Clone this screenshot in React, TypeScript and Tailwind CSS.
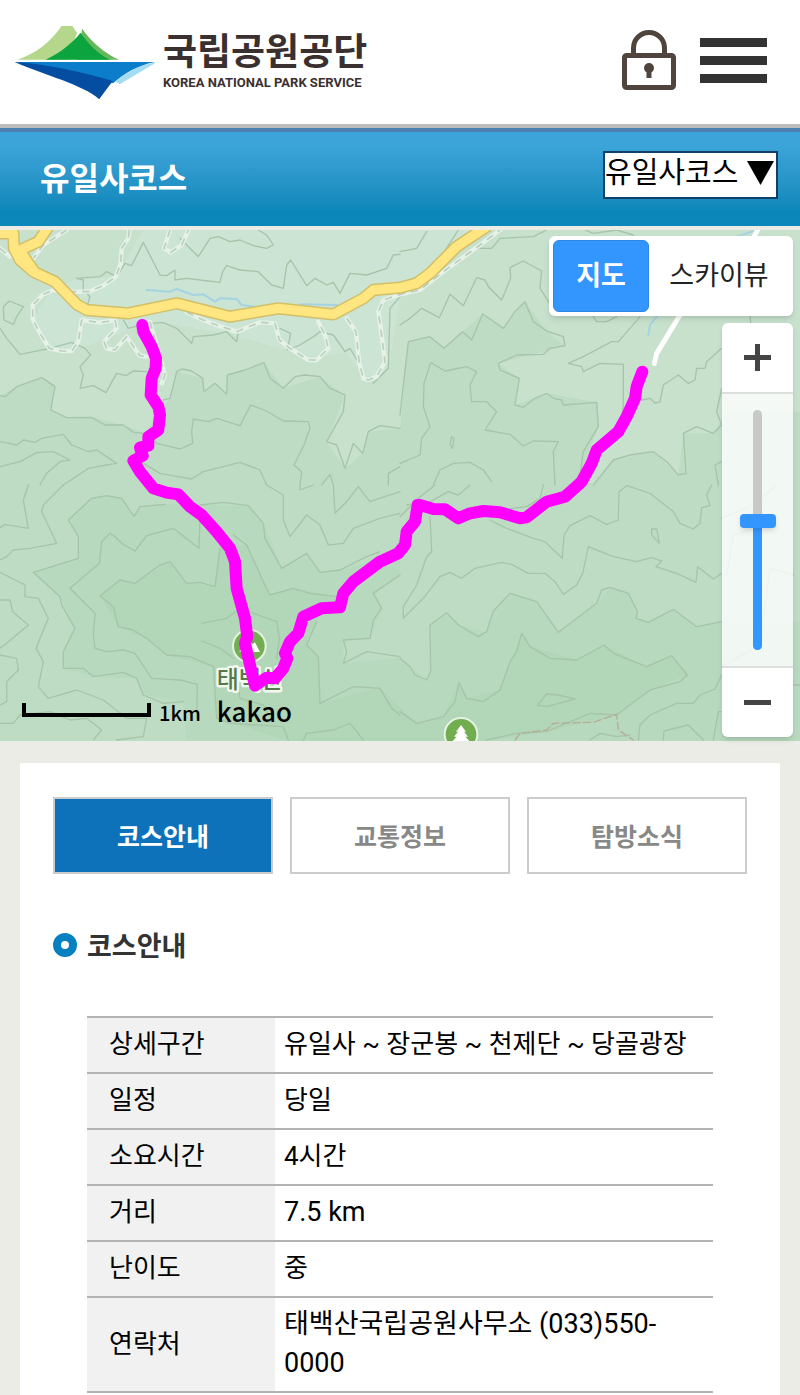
import { useState } from "react";

const courses = ["유일사코스", "백단사코스", "당골코스"];
const tabs = ["코스안내", "교통정보", "탐방소식"];

const details = [
  { label: "상세구간", value: "유일사 ~ 장군봉 ~ 천제단 ~ 당골광장" },
  { label: "일정", value: "당일" },
  { label: "소요시간", value: "4시간" },
  { label: "거리", value: "7.5 km", numeric: true },
  { label: "난이도", value: "중" },
  { label: "연락처", value: "태백산국립공원사무소 (033)550-0000", numeric: true },
];

// --- Map data, one list of lines per map tile (1200 x 780 units each) ---
const contoursNW = [
  "0,310 20,340 60,388 150,370 215,352 255,370 272,390 240,425 250,450 240,490 280,482 318,503 350,445 378,452 400,438 440,440",
  "490,525 510,520 530,440 545,432 575,438 608,460 612,500 645,475 680,507 682,450 735,435 792,413 810,460 850,490 885,455 915,450 960,455 990,490 1035,510 1030,560 980,650 1010,660 1035,730 1060,655 1088,685 1105,620 1140,602 1200,610",
  "0,512 15,515 50,485 125,458 165,485 152,555 200,578 275,577 315,600 370,600 400,622 435,625 470,655 540,672 578,655 575,620 580,582 625,590 650,580 720,602 752,540 800,558 850,588 925,590 930,610 912,660 882,720 905,740 900,780",
  "0,650 50,660 70,645 105,652 125,640 190,628 215,660 265,680 290,675 350,715 320,720 265,730 190,780",
  "0,725 60,710 110,683 160,680 210,705 180,710 140,745 120,780",
  "430,715 480,745 575,762 610,740 720,712 780,735 800,780",
  "230,160 300,155 320,140 350,155 375,115 395,122 430,52 480,150 500,152 525,135 525,165 560,160 600,165 660,172 668,140 680,122 720,135 775,140 815,180 850,190 860,120 872,105 920,182 945,160 980,180 1000,172 1020,205 1050,145 1100,150 1160,130 1180,90 1200,88",
  "540,40 595,95 630,40 655,35 690,50 720,45 760,62 800,70 820,60 800,30 775,15",
  "10,245 28,228 70,245 50,275 40,298 12,285 10,245",
  "370,285 385,310 440,295 490,293 530,310 575,355 580,335 640,330 680,320 710,350 715,320",
  "840,310 872,325 862,375 900,360 940,335 960,320 1000,330 1035,380 1050,370 1080,420",
  "1120,475 1165,430 1170,250 1200,215",
  "230,160 250,165 250,195 270,215 262,240",
  "1165,780 1165,745 1200,725",
  "965,780 990,748 1000,780",
];

const contoursNE = [
  "0,300 30,280 65,250 118,278 150,208 190,242 230,158 255,165 265,185 305,225 332,160 330,128 370,108 425,138 420,190 447,232",
  "0,570 25,350 90,335 132,370 188,320 215,345 248,267 310,310 345,260 375,230 400,290 440,318 490,335 495,362 450,370 430,388 350,390 295,415 300,435 358,460 345,540 370,547 405,520 440,505 460,520 485,525 490,540 590,532 595,605 550,680 540,750",
  "0,715 60,690 65,640 90,605 70,545 72,475 92,413 135,438 200,425 230,440 210,480 215,530 260,530 290,560 255,615 330,628 370,663 400,648 475,650 460,680 465,780",
  "100,780 120,735 160,715 210,712 250,735 275,770",
  "150,660 155,635 162,640 158,670 150,660",
  "720,275 690,310 655,350 635,350 550,395 505,415 545,425 550,440 600,415 670,418 670,540 665,580",
  "965,370 920,410 915,430 890,430 885,465 865,475 835,450 790,480 780,530 765,535 750,520 725,525",
  "965,490 950,560 965,600 940,625 890,605 850,625 858,745 835,750 800,710 760,680 690,690 640,705 580,780",
  "965,710 945,720 955,780",
  "0,80 50,70 80,20",
  "0,180 100,130 175,15",
  "240,70 275,70 300,40 400,35 440,15",
  "555,15 580,25 650,15 700,30",
  "580,275 590,290 620,290 650,275",
  "1050,275 1055,310 1110,330",
];

const contoursSW = [
  "85,0 70,45 85,130 15,118 0,128",
  "190,0 130,60 125,80 170,175 90,190 40,195 20,215 0,225",
  "495,58 420,65 402,95 365,40 320,32 275,40 205,105 235,155 235,220 100,262 180,335 185,360 225,430 190,500 190,550 250,550 280,575 370,562 410,580 430,630 490,655 550,650",
  "600,100 597,190 520,130 440,152 405,198 365,175 345,155 330,145 305,170 298,235 210,310 285,385 280,450 285,490 320,500 370,495 405,505 455,580 540,585 592,598 590,700",
  "660,190 645,305 600,292 560,295 510,230 480,240 405,295 360,285 300,332 340,365 355,425 400,435 440,460 500,510 570,515 640,545 650,700 690,715 850,725 865,765",
  "600,60 670,52 745,62 790,115 795,160 845,250 920,205 960,262 1020,255 1100,215 1140,200",
  "800,0 850,30 850,105 870,155 920,90 960,120 985,180 1030,175 1060,130 1100,115 1140,100 1200,85",
  "700,150 740,180 790,290 810,330 880,310 930,325 1010,335",
  "605,415 680,400 720,370 830,410 838,460 830,520",
  "605,468 660,490 700,520",
  "950,410 920,480 955,515 960,655 1060,605 1140,610 1175,670 1200,690",
  "1200,270 1120,325 1145,370 1120,405 1110,460 1030,465 1040,500 1030,535 1100,500 1200,515",
  "0,345 30,345 38,380 85,420 20,475 0,490",
  "0,262 75,300 75,335 115,340 145,400 108,490 130,530 115,605 145,640 230,615 310,645 380,700 440,700 430,755 350,765",
  "0,510 50,520 55,555 20,590 20,650 0,660",
  "0,715 40,715 60,690 150,680 210,705 260,700 305,735 280,765",
  "910,765 920,745 1000,735 1050,715 1090,765",
  "1000,0 1005,85 1040,50 1075,5 1110,50 1200,20",
  "900,0 900,15 940,0",
  "715,600 720,640 790,660 800,680",
];

const contoursSE = [
  "0,95 55,40 105,0",
  "20,60 90,50 145,20 175,30 210,0",
  "220,80 300,75 380,65 420,40 430,0",
  "90,95 95,200 80,215 50,300 10,365 10,400 70,340 120,275 150,262 185,280 225,250 305,232 335,238 385,265 435,265 465,290 490,328 530,300 548,265 565,185 640,215 710,230 755,218 785,228 768,245 830,265 888,292 893,245 940,282 965,265",
  "270,105 320,130 400,160 435,170 487,220 492,150 510,122 570,92 620,118 655,105 657,20 680,2 750,25 820,80 840,115 880,132 900,115 905,68 930,62 920,30 935,0",
  "0,520 30,545 45,570 80,585 92,560 90,420 140,383 175,420 235,455 260,440 280,378 330,325 410,350 475,442 590,355 605,315 630,307 685,325 712,380 708,400 745,412 820,373 890,425 965,410",
  "0,680 50,715 130,695 165,650 177,592 200,640 250,650 300,615 330,530 350,500 365,445 390,485 450,520 530,525 612,480 640,505 740,545 815,512 862,570 840,590 750,615 650,690 570,685 440,740 350,745 260,765",
  "412,660 440,627 475,630 525,642 440,665 412,660",
  "755,132 770,132 778,175 755,150 755,132",
  "715,765 720,720 750,690 830,655 880,655 900,630 945,612 965,570",
  "790,765 792,738 865,720 910,765",
  "940,765 955,680 965,680",
  "570,765 600,745 650,755 690,750",
  "965,100 1060,60 1130,0",
  "980,270 1000,150 1060,130",
  "965,545 1080,480 1110,250 1180,270",
  "1180,600 1200,600",
];

const minorRoads = [
  "200,15 130,60 100,100",
  "0,70 30,95",
  "388,15 385,40 365,70 362,115 348,155 308,183 265,200 220,200 160,195 130,208 98,240 98,283 120,325 148,370 185,378 215,378 235,350 245,285 300,293 345,285 350,310 312,350 320,370 345,375 380,335 420,392 440,395",
  "510,15 492,70 512,82 545,60 565,15",
  "450,290 495,450 485,475",
  "560,262 610,285 650,300 710,320 780,292 825,295 838,345 870,370 925,405 950,405 985,370 975,330 955,290",
  "1040,280 1068,320 1078,415 1090,460 1105,465 1130,455 1155,410 1145,330 1135,260 1150,225 1200,208 1260,195 1330,140 1440,60 1500,15",
];

const mainRoads = [
  "145,5 115,50 60,75 75,100 100,135",
  "-10,25 40,25 42,70 60,105 100,140 165,170 230,238 260,255 385,265 530,235 690,275 835,250 1000,268 1090,220 1120,195 1200,188 1250,175 1290,145 1370,65 1460,5 1480,-10",
];

const streams = [
  "440,195 510,200 530,192 580,210 610,208 645,230 660,220 710,222 725,240 765,245",
  "900,238 1010,240",
  "1970,275 1950,300 1945,330",
  "2210,35 2270,15",
];

const route =
  "427,300 430,320 455,365 468,400 467,430 455,460 452,510 475,545 480,570 475,615 445,635 445,662 420,668 428,692 400,707 420,740 460,790 500,803 535,808 570,845 605,870 650,920 690,970 705,1010 710,1090 735,1180 742,1235 735,1255 750,1320 765,1382 800,1358 825,1360 850,1330 862,1300 855,1285 870,1250 895,1225 910,1175 965,1150 1020,1147 1030,1105 1060,1070 1140,1010 1195,985 1215,960 1220,920 1245,890 1253,840 1260,840 1300,852 1335,853 1375,880 1410,865 1450,858 1500,862 1560,880 1580,877 1640,830 1695,815 1745,770 1775,715 1790,675 1855,620 1880,575 1905,520 1910,485 1927,440";

// Shading of the higher ground, from low to high
const slopes = [
  {
    fill: "#bedcc4",
    points:
      "0,512 50,485 125,458 165,485 152,555 200,578 275,577 370,600 435,625 510,520 530,440 608,460 612,500 645,475 680,507 682,450 792,413 850,490 960,455 1035,510 980,650 1035,730 1088,685 1105,620 1200,610 1225,350 1290,335 1332,370 1448,267 1510,310 1575,230 1640,318 1695,362 1495,415 1558,460 1545,540 1640,505 1790,532 1795,605 1740,750 1780,780 1840,705 1960,680 2035,750 2050,625 2140,625 2180,560 2400,560 2400,1548 0,1548",
  },
  {
    fill: "#b7d9bd",
    points:
      "495,838 420,845 402,875 365,820 320,812 275,820 205,885 235,935 235,1000 100,1042 180,1115 225,1210 190,1280 190,1330 280,1355 410,1360 430,1410 550,1430 560,1548 2400,1548 2400,1190 2165,1190 2090,1205 2020,1153 1945,1192 1912,1180 1885,1105 1830,1087 1790,1135 1675,1222 1610,1130 1530,1105 1480,1158 1460,1220 1375,1200 1340,1163 1290,1200 1292,1340 1280,1365 1200,1300 1030,1315 1030,1245 1110,1240 1145,1150 1120,1105 1200,1050 1200,980 1045,1030 960,1042 920,985 845,1030 790,895 745,842",
  },
  {
    fill: "#b1d6b8",
    points:
      "660,970 645,1085 560,1075 510,1010 405,1075 360,1065 300,1112 355,1205 440,1240 500,1290 640,1325 650,1480 865,1548 1460,1548 1640,1520 1850,1470 1950,1395 2062,1350 2015,1292 1940,1325 1812,1260 1730,1305 1590,1265 1565,1225 1500,1395 1400,1420 1377,1372 1330,1475 1250,1495 1140,1390 960,1435 955,1295 920,1260 950,1190 1010,1115 880,1090 810,1110 740,960",
  },
];

function Lines({ lines }: { lines: string[] }) {
  return (
    <>
      {lines.map((points) => (
        <polyline key={points} points={points} />
      ))}
    </>
  );
}

function TrailMap() {
  return (
    <svg
      viewBox="0 15 2400 1533"
      preserveAspectRatio="xMidYMid slice"
      className="block h-full w-full"
      fill="none"
      strokeLinecap="round"
      strokeLinejoin="round"
      role="img"
      aria-label="태백산 유일사코스 지도"
    >
      <rect y="15" width="2400" height="1533" fill="#c7e1cd" />
      <polygon
        fill="#cce4d4"
        points="150,200 230,160 350,155 430,15 1430,15 1370,65 1250,175 1200,215 1165,430 1105,465 1035,380 940,400 700,330 530,300 440,295 240,370 150,370 98,283"
      />
      {slopes.map(({ fill, points }) => (
        <polygon key={fill} fill={fill} points={points} />
      ))}

      <g stroke="#a6c4a9" strokeWidth="4">
        <Lines lines={contoursNW} />
        <g transform="translate(1200 0)">
          <Lines lines={contoursNE} />
        </g>
        <g transform="translate(0 780)">
          <Lines lines={contoursSW} />
        </g>
        <g transform="translate(1200 780)">
          <Lines lines={contoursSE} />
        </g>
      </g>

      <g stroke="#a5d3e2" strokeWidth="6">
        <Lines lines={streams} />
      </g>
      <g stroke="#e6f1e8" strokeWidth="13">
        <Lines lines={minorRoads} />
      </g>
      <g stroke="#b9d0bc" strokeWidth="5" strokeDasharray="22 18" strokeLinecap="butt">
        <Lines lines={minorRoads} />
      </g>
      <g stroke="#d3bf68" strokeWidth="37">
        <Lines lines={mainRoads} />
      </g>
      <g stroke="#ffe680" strokeWidth="28">
        <Lines lines={mainRoads} />
      </g>
      <polyline stroke="#ffffff" strokeWidth="15" points="2275,10 2255,50 2040,270 1970,385 1963,415" />
      <polyline
        stroke="#b7ab94"
        strokeWidth="4"
        strokeDasharray="22 10"
        points="1545,1545 1560,1525 1640,1515 1660,1495 1780,1492 1850,1468 1855,1515 1900,1545"
      />

      {/* peak marker */}
      <circle cx="748" cy="1263" r="49" fill="#72ad50" stroke="#e5f1e1" strokeWidth="6" />
      <path d="M718 1281 L742 1238 L758 1258 L765 1252 L780 1281 Z" fill="#ffffff" />
      <text
        x="650"
        y="1388"
        fontSize="72"
        fontWeight="500"
        fill="#56794a"
        stroke="#f3f8f0"
        strokeWidth="14"
        paintOrder="stroke"
        className="font-['Noto_Sans_CJK_KR',sans-serif]"
      >
        태백산
      </text>

      {/* forest marker */}
      <circle cx="1383" cy="1528" r="49" fill="#72ad50" stroke="#e5f1e1" strokeWidth="6" />
      <path
        d="M1383 1500 L1398 1520 H1392 L1404 1535 H1396 L1410 1550 H1356 L1370 1535 H1362 L1374 1520 H1368 Z"
        fill="#ffffff"
      />

      <polyline points={route} stroke="#ff00ff" strokeWidth="36" />
    </svg>
  );
}

function Logo() {
  return (
    <a href="#" className="flex items-center gap-2">
      <svg viewBox="40 75 424 225" className="h-[75px] w-[141px]" aria-hidden="true">
        <path d="M50 179 C110 160 150 125 183 78 H216 Q222 90 230 98 L200 179 Z" fill="#b4d78b" />
        <path d="M245 86 C275 130 315 160 355 179 H230 Z" fill="#66b95b" />
        <path d="M135 179 C180 158 215 130 240 98 C262 130 290 160 328 179 Z" fill="#0ba43f" />
        <path d="M345 245 Q400 198 470 186 Q420 215 358 253 Z" fill="#a3dcf3" />
        <path d="M42 186 H464 C415 195 370 220 338 250 L200 212 Z" fill="#0b7dcb" />
        <path d="M42 186 C140 192 240 215 337 243 Q318 268 296 298 C250 255 130 225 42 186 Z" fill="#054da1" />
      </svg>
      <span className="flex flex-col text-[#3a3030]">
        <span className="text-[37px] leading-[42px] font-bold">국립공원공단</span>
        <span className="text-[13px] leading-[18px] font-bold">KOREA NATIONAL PARK SERVICE</span>
      </span>
    </a>
  );
}

function ZoomControl() {
  const [level, setLevel] = useState(8);
  const filled = ((level - 1) / 13) * 100;

  return (
    <div className="absolute top-[93px] right-[7px] flex w-[71px] flex-col overflow-hidden rounded-md shadow-md">
      <button
        type="button"
        aria-label="확대"
        onClick={() => setLevel(Math.min(14, level + 1))}
        className="flex h-[71px] items-center justify-center border-b-2 border-[#dcdfdc] bg-white"
      >
        <svg viewBox="0 0 27 27" className="size-[27px]" stroke="#444444" strokeWidth="5">
          <path d="M0 13.5 H27 M13.5 0 V27" />
        </svg>
      </button>
      <div className="flex h-[272px] justify-center bg-white/80 py-4">
        <div className="relative flex w-9 justify-center">
          <div className="flex w-[9px] flex-col justify-end overflow-hidden rounded-full bg-[#c8c8c8]">
            <div className="bg-[#3396ff]" style={{ height: `${filled}%` }} />
          </div>
          <input
            type="range"
            aria-label="지도 확대 수준"
            min={1}
            max={14}
            value={level}
            onChange={(e) => setLevel(Number(e.target.value))}
            className="absolute inset-0 h-full w-9 appearance-none bg-transparent [direction:rtl] [writing-mode:vertical-lr] [&::-webkit-slider-thumb]:h-[14px] [&::-webkit-slider-thumb]:w-9 [&::-webkit-slider-thumb]:appearance-none [&::-webkit-slider-thumb]:rounded [&::-webkit-slider-thumb]:bg-[#3396ff] [&::-webkit-slider-thumb]:shadow-md"
          />
        </div>
      </div>
      <button
        type="button"
        aria-label="축소"
        onClick={() => setLevel(Math.max(1, level - 1))}
        className="flex h-[71px] items-center justify-center border-t-2 border-[#dcdfdc] bg-white"
      >
        <svg viewBox="0 0 27 5" className="h-[5px] w-[27px]">
          <rect width="27" height="5" fill="#444444" />
        </svg>
      </button>
    </div>
  );
}

export default function App() {
  const [tab, setTab] = useState(tabs[0]);

  return (
    <div className="flex min-h-screen flex-col bg-[#ebece6] font-[Roboto,'Noto_Sans_CJK_KR',sans-serif] text-black">
      <header className="flex h-32 items-center justify-between border-b-4 border-[#bdbdbd] bg-white pr-[33px] pl-[14px]">
        <Logo />
        <div className="flex items-center gap-6 pb-1">
          <button type="button" aria-label="로그인">
            <svg viewBox="0 0 54 60" className="block h-[60px] w-[54px]" fill="none" stroke="#50453e" strokeWidth="5">
              <rect x="2.5" y="25.5" width="49" height="32" rx="2" />
              <path d="M11.5 25 V18 a15.5 15.5 0 0 1 31 0 V25" />
              <circle cx="27" cy="38" r="5" fill="#50453e" stroke="none" />
              <path d="M27 38 V48" />
            </svg>
          </button>
          <button type="button" aria-label="메뉴" className="flex w-[67px] flex-col gap-[9px]">
            <span className="h-[9px] bg-[#333333]" />
            <span className="h-[9px] bg-[#333333]" />
            <span className="h-[9px] bg-[#333333]" />
          </button>
        </div>
      </header>

      <div className="flex h-[98px] items-center justify-between border-t-4 border-[#4b80b0] bg-linear-to-b from-[#3ca4d8] from-15% to-[#0b87b9] to-85% pr-[22px] pl-10">
        <h1 className="text-[32px] leading-10 font-bold text-white">유일사코스</h1>
        <div className="relative mb-2">
          <select
            aria-label="코스 선택"
            className="block h-12 w-[175px] appearance-none border-2 border-[#10406a] bg-white pb-1 text-[29px] leading-10"
          >
            {courses.map((course) => (
              <option key={course}>{course}</option>
            ))}
          </select>
          <svg viewBox="0 0 27 24" className="pointer-events-none absolute top-[10px] right-1 h-6 w-[27px]" aria-hidden="true">
            <path d="M0 0 H27 L13.5 24 Z" />
          </svg>
        </div>
      </div>

      <section className="relative h-[515px] border-t-4 border-[#ebece6]">
        <TrailMap />
        <div className="absolute top-[6px] right-[7px] flex rounded-md bg-white p-1 text-[27px] leading-10 shadow-md">
          <button type="button" className="h-[72px] w-24 rounded-md border border-[#2f85e0] bg-[#3396ff] font-bold text-white">
            지도
          </button>
          <button type="button" className="h-[72px] w-[140px] text-[#222222]">
            스카이뷰
          </button>
        </div>
        <ZoomControl />
        <div className="absolute bottom-3 left-[22px] flex items-end gap-2 font-['Noto_Sans_CJK_KR',sans-serif] font-medium">
          <span className="mb-3 h-[14px] w-[129px] border-4 border-t-0 border-black" />
          <span className="text-[20px] leading-8">1km</span>
          <span className="ml-2 text-[26px] leading-9">kakao</span>
        </div>
      </section>

      <main className="mx-5 mt-[22px] grow bg-white px-[33px] pt-[34px]">
        <div role="tablist" className="flex gap-[17px]">
          {tabs.map((name) => (
            <button
              key={name}
              type="button"
              role="tab"
              aria-selected={tab === name}
              onClick={() => setTab(name)}
              className={
                tab === name
                  ? "h-[77px] flex-1 border-2 border-[#cccccc] bg-[#0e72bb] pt-1 text-[25px] font-bold text-white"
                  : "h-[77px] flex-1 border-2 border-[#cccccc] bg-white pt-1 text-[25px] font-bold text-[#888888]"
              }
            >
              {name}
            </button>
          ))}
        </div>

        <h2 className="mt-[51px] flex items-center gap-[10px] text-[27px] leading-9 font-bold text-[#333333]">
          <span className="size-6 rounded-full border-8 border-[#0780c0] bg-white" />
          <span className="pt-1">코스안내</span>
        </h2>

        <div className="mt-[51px] px-[34px]">
          <table className="w-full border-collapse text-left text-[26px] leading-[39px]">
            <tbody>
              {details.map(({ label, value, numeric }) => (
                <tr key={label} className="border-y-2 border-[#b3b3b3]">
                  <th scope="row" className="w-[188px] bg-[#f1f1f1] pt-[7px] pb-2 pl-[22px] font-normal">
                    {label}
                  </th>
                  <td className={numeric ? "pt-[7px] pr-2 pb-2 pl-[9px] text-[27px]" : "pt-[7px] pr-2 pb-2 pl-[9px]"}>
                    {value}
                  </td>
                </tr>
              ))}
            </tbody>
          </table>
        </div>
      </main>
    </div>
  );
}
